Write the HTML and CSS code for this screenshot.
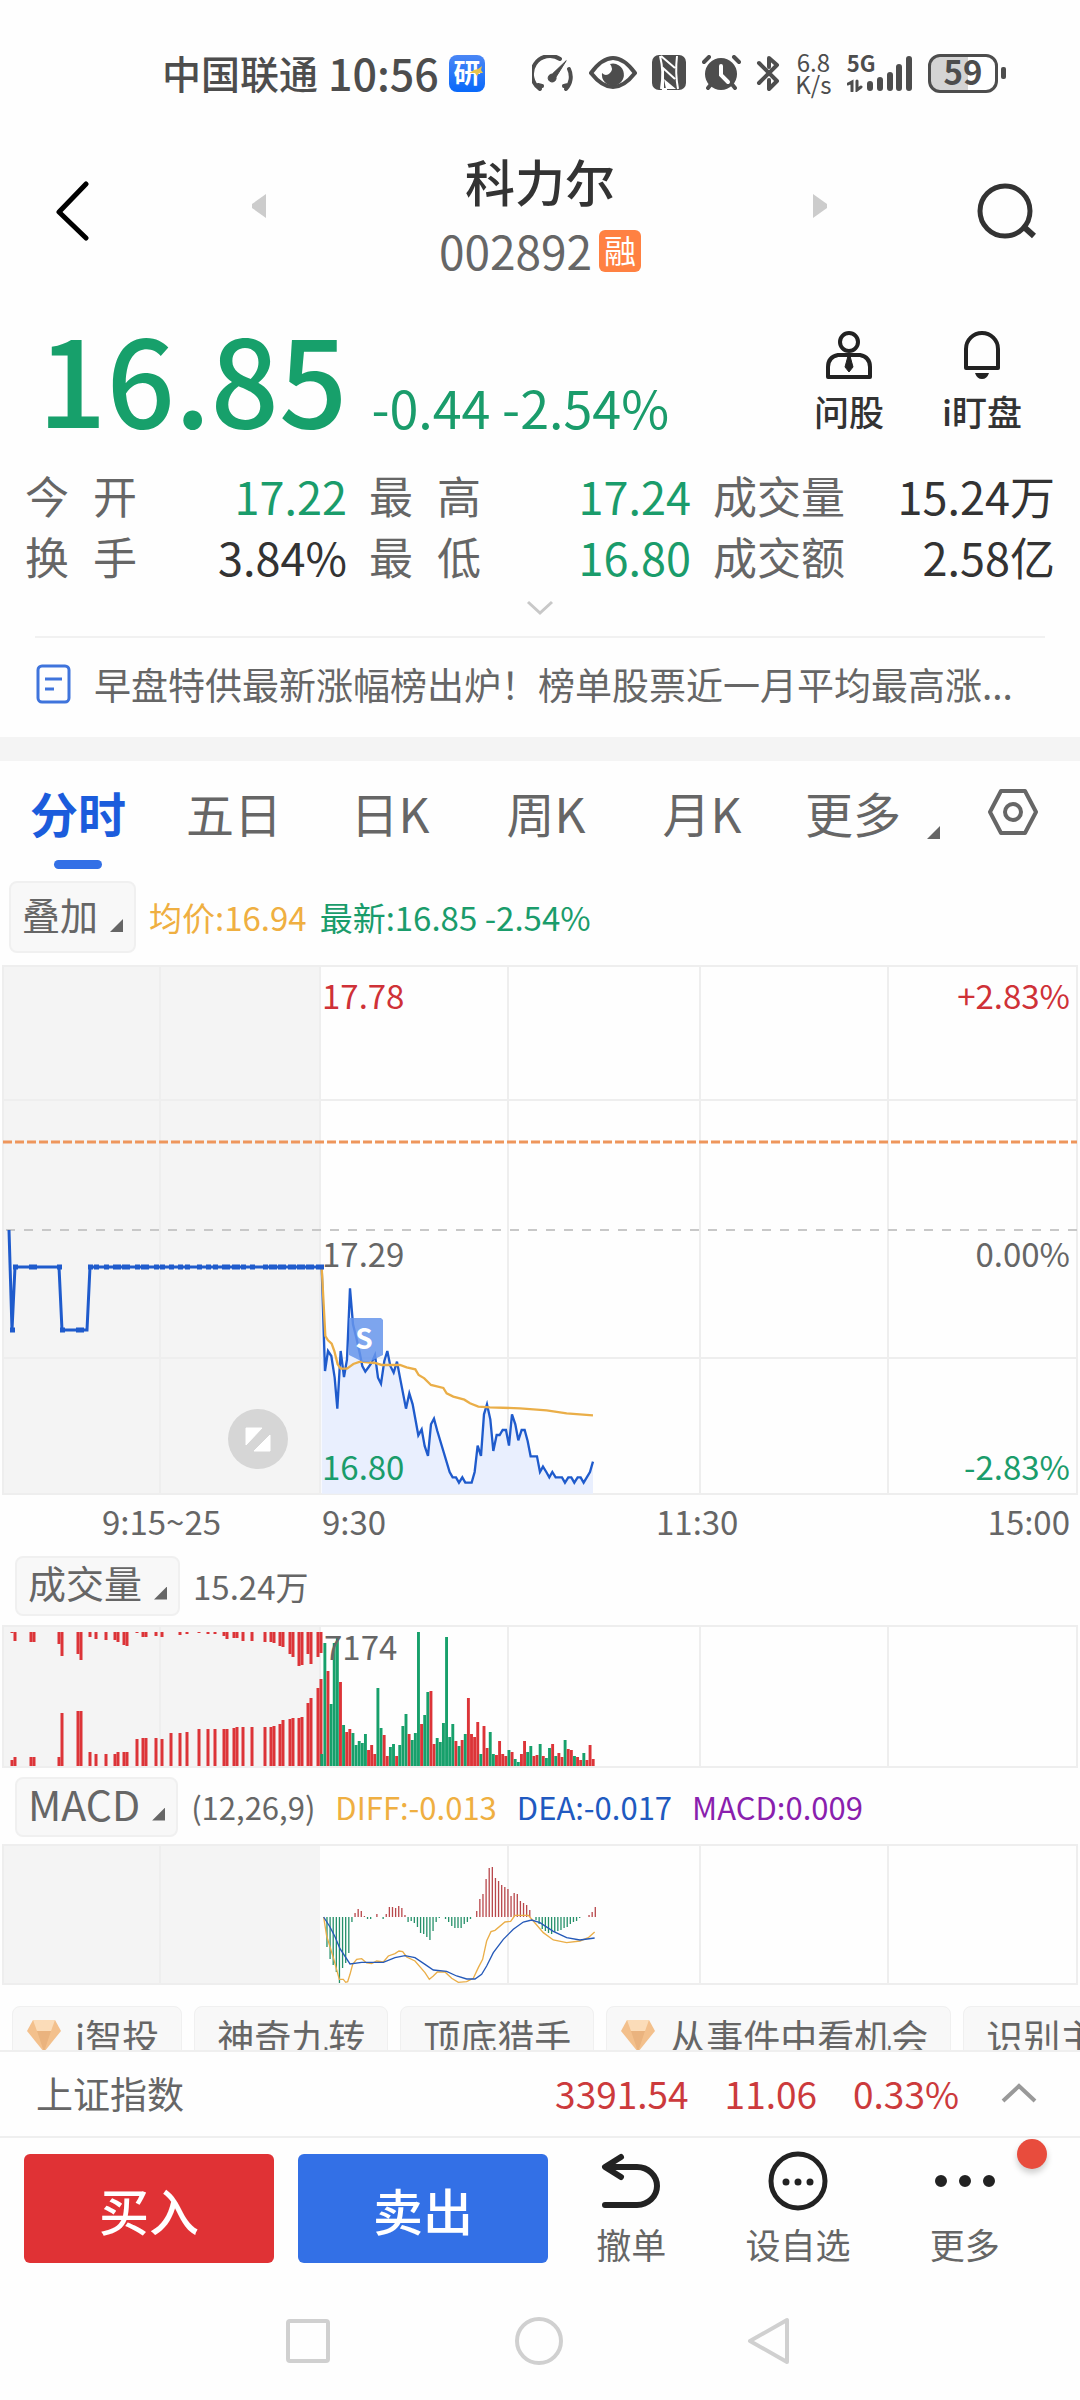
FILE: index.html
```html
<!DOCTYPE html>
<html lang="zh-CN">
<head>
    <meta charset="UTF-8">
    <meta name="viewport" content="width=device-width, initial-scale=1.0">
    <title>科力尔 002892</title>
    <link rel="stylesheet" href="styles.css">
</head>
<body>
<div class="status">
    <span class="carrier">中国联通</span>
    <span class="clock">10:56</span>
    <span class="app-icon">研<svg width="14" height="12" viewBox="0 0 14 12"><path d="M0 7l5-3 4-1 4-3-1 4 2 3-4 0-2 3-2-3z" fill="#e9c44c"/></svg></span>
    <div class="status-icons">
        <svg width="42" height="37" viewBox="0 0 42 37" fill="none" stroke="#4d4d4d" stroke-width="4" stroke-linecap="round">
            <path d="M28 4A18 18 0 0 0 8 34M10 31l-4-1M37 14A18 18 0 0 1 34 34M32 31l4-1"/>
            <path d="M34 6L24 22a4 4 0 1 1-4-3z" fill="#4d4d4d" stroke-width="1"/>
        </svg>
        <svg width="48" height="34" viewBox="0 0 48 34">
            <path d="M2 17Q13 2 24 2T46 17Q35 31 24 31T2 17z" fill="none" stroke="#4d4d4d" stroke-width="4" stroke-linejoin="round"/>
            <path d="M21 8A11 11 0 1 1 13 17Q17 21 21 17T21 8z" fill="#4d4d4d"/>
        </svg>
        <svg width="34" height="36" viewBox="0 0 34 36">
            <rect width="34" height="35" rx="7" fill="#4d4d4d"/>
            <path d="M8 1Q12 16 9 34M26 34Q23 18 25 1M9 1L23 13M15 34h-4V13l12 11" fill="none" stroke="#fff" stroke-width="2"/>
            <path d="M12 24l12 10H14z" fill="#fff"/>
        </svg>
        <svg width="39" height="36" viewBox="0 0 39 36">
            <circle cx="19" cy="19" r="16" fill="#4d4d4d"/>
            <path d="M2 7l5-5M37 7l-5-5M6 33l4-5M33 33l-4-5" stroke="#4d4d4d" stroke-width="4" stroke-linecap="round"/>
            <path d="M19 11v9l7 7" stroke="#fff" stroke-width="4" fill="none" stroke-linecap="round"/>
        </svg>
        <svg width="24" height="37" viewBox="0 0 24 37" fill="none" stroke="#4d4d4d" stroke-width="4" stroke-linecap="round" stroke-linejoin="round">
            <path d="M3 8l18 18-8 8V25M13 12V3l8 7L3 28"/>
        </svg>
        <div class="speed"><span>6.8</span><span>K/s</span></div>
        <div class="signal">
            <span>5G</span>
            <svg width="66" height="37" viewBox="0 0 66 37" fill="none" stroke="#4d4d4d" stroke-width="6" stroke-linecap="round">
                <path d="M23 29v4M33 25v8M43 20v13M52 12v21M62 4v29"/>
                <path d="M1 29l4-2v9M10 26v9l4-3" stroke-width="3"/>
            </svg>
        </div>
        <div class="battery"><span>59</span></div>
    </div>
</div>

<header class="head">
    <a class="back" href="#" aria-label="返回">
        <svg width="34" height="60" viewBox="0 0 34 60"><path d="M31 3L4 31l27 26" fill="none" stroke="#000" stroke-width="5" stroke-linecap="round" stroke-linejoin="round"/></svg>
    </a>
    <button class="plain prev" aria-label="上一只"><svg width="14" height="24"><path d="M14 0v24L0 14v-4z" fill="#ccc"/></svg></button>
    <div class="name">
        <h1>科力尔</h1>
        <div class="code">002892<span class="badge">融</span></div>
    </div>
    <button class="plain next" aria-label="下一只"><svg width="14" height="24"><path d="M0 0v24l14-10v-4z" fill="#ccc"/></svg></button>
    <button class="plain search" aria-label="搜索">
        <svg width="62" height="58" viewBox="0 0 62 58" fill="none" stroke="#333" stroke-width="5"><circle cx="29" cy="29" r="25"/><path d="M48 45l10 9" stroke-width="6"/></svg>
    </button>
</header>

<section class="quote">
    <span class="price">16.85</span>
    <span class="change">-0.44 -2.54%</span>
    <button class="plain tool">
        <svg width="46" height="48" viewBox="0 0 46 48" fill="none" stroke="#222" stroke-width="4">
            <circle cx="23" cy="11" r="9"/><path d="M12 24h22q10 2 10 12v10H2V36q0-10 10-12z" stroke-linejoin="round"/><path d="M22 25h2l3 11-4 5-4-5z" fill="#222" stroke-width="1"/>
        </svg>
        问股
    </button>
    <button class="plain tool">
        <svg width="38" height="48" viewBox="0 0 38 48" fill="none" stroke="#222" stroke-width="4">
            <path d="M3 37V18a16 16 0 0 1 32 0v19z" stroke-linejoin="round"/><path d="M12 42h14q-2 6-7 6t-7-6z" fill="#222" stroke="none"/>
        </svg>
        i盯盘
    </button>
</section>

<dl class="stats">
    <dt>今 开</dt><dd class="green">17.22</dd>
    <dt>最 高</dt><dd class="green">17.24</dd>
    <dt>成交量</dt><dd>15.24万</dd>
    <dt>换 手</dt><dd>3.84%</dd>
    <dt>最 低</dt><dd class="green">16.80</dd>
    <dt>成交额</dt><dd>2.58亿</dd>
</dl>
<button class="plain expand" aria-label="展开"><svg width="28" height="16"><path d="M2 2l12 11L26 2" fill="none" stroke="#c8c8c8" stroke-width="3"/></svg></button>

<a class="notice" href="#">
    <svg width="36" height="40" viewBox="0 0 36 40" fill="none" stroke="#3f74dc" stroke-width="3"><rect x="2" y="2" width="31" height="36" rx="4"/><path d="M9 15h17M9 25h9"/></svg>
    <span>早盘特供最新涨幅榜出炉！榜单股票近一月平均最高涨...</span>
</a>

<nav class="tabs">
    <button class="plain active">分时</button>
    <button class="plain">五日</button>
    <button class="plain">日K</button>
    <button class="plain">周K</button>
    <button class="plain">月K</button>
    <button class="plain more">更多<i class="corner"></i></button>
    <button class="plain" aria-label="设置"><svg width="50" height="46" viewBox="0 0 50 46" fill="none" stroke="#666" stroke-width="4"><path d="M13 2h24l11 21-11 21H13L2 23z" stroke-linejoin="round"/><circle cx="25" cy="23" r="8"/></svg></button>
</nav>

<div class="bar overlay">
    <button class="pick">叠加<i class="corner"></i></button>
    <span class="yellow">均价:16.94</span>
    <span class="green">最新:16.85 -2.54%</span>
</div>
<svg class="chart" viewBox="0 0 1080 584">
    <rect x="3" y="5" width="317" height="528" fill="#f4f4f4"/>
    <path class="grid" d="M3 5h1074v528H3zM3 139h1074M3 397h1074M160 5v528M320 5v528M508 5v528M700 5v528M888 5v528"/>
    <path d="M3 181h1074" stroke="#ee965c" stroke-width="3" stroke-dasharray="9 3"/>
    <path d="M6 269h1071" stroke="#c8c8c8" stroke-width="2" stroke-dasharray="9 9"/>
    <g id="minute" transform="translate(300 310) scale(0.3333)"></g>
    <path class="blue-line" d="M9 269L12 369L15 306H59L62 369H87L90 306H322"/>
    <path id="dots" class="dots"/>
    <path d="M349 357h32l2 2v35l-14 7h-6l-14-7z" fill="#6695eb" opacity="0.85"/>
    <text x="364" y="388" class="mark">S</text>
    <circle cx="258" cy="478" r="30" fill="#d6d6d6"/>
    <path d="M246 467h16l-16 17zM270 474v16h-16z" fill="#fff" stroke="#fff"/>
    <text x="322" y="48" class="red-text">17.78</text>
    <text x="322" y="306">17.29</text>
    <text x="322" y="519" class="green-text">16.80</text>
    <g text-anchor="end">
        <text x="1070" y="48" class="red-text">+2.83%</text>
        <text x="1070" y="306">0.00%</text>
        <text x="1070" y="519" class="green-text">-2.83%</text>
        <text x="1070" y="574">15:00</text>
    </g>
    <text x="102" y="574">9:15~25</text>
    <text x="322" y="574">9:30</text>
    <text x="656" y="574">11:30</text>
</svg>

<div class="bar">
    <button class="pick">成交量<i class="corner"></i></button>
    <span>15.24万</span>
</div>
<svg class="chart" viewBox="0 0 1080 150">
    <rect x="3" y="5" width="317" height="141" fill="#f4f4f4"/>
    <path class="grid" d="M3 5h1074v141H3zM160 5v141M320 5v141M508 5v141M700 5v141M888 5v141"/>
    <g id="volume"></g>
    <text x="324" y="39">7174</text>
</svg>

<div class="bar macd">
    <button class="pick">MACD<i class="corner"></i></button>
    <span>(12,26,9)</span>
    <span class="yellow">DIFF:-0.013</span>
    <span class="blue">DEA:-0.017</span>
    <span class="purple">MACD:0.009</span>
</div>
<svg class="chart" viewBox="0 0 1080 148">
    <rect x="3" y="4" width="317" height="139" fill="#f4f4f4"/>
    <path class="grid" d="M3 4h1074v139H3zM160 4v139M508 4v139M700 4v139M888 4v139"/>
    <g id="macd"></g>
</svg>

<div class="chips">
    <button><svg width="34" height="32" viewBox="0 0 34 32"><path d="M6 0h22l6 11-17 21L0 11z" fill="#f3c08c"/><path d="M6 0h22l-4 11H10z" fill="#fbdcb8"/><path d="M10 11h14l-7 21z" fill="#eab37e"/></svg>i智投</button>
    <button>神奇九转</button>
    <button>顶底猎手</button>
    <button><svg width="34" height="32" viewBox="0 0 34 32"><path d="M6 0h22l6 11-17 21L0 11z" fill="#f3c08c"/><path d="M6 0h22l-4 11H10z" fill="#fbdcb8"/><path d="M10 11h14l-7 21z" fill="#eab37e"/></svg>从事件中看机会</button>
    <button>识别主力</button>
</div>

<div class="index">
    <span class="index-name">上证指数</span>
    <span>3391.54</span>
    <span>11.06</span>
    <span>0.33%</span>
    <button class="plain" aria-label="展开指数"><svg width="36" height="20"><path d="M2 18L18 3l16 15" fill="none" stroke="#999" stroke-width="4"/></svg></button>
</div>

<footer class="trade">
    <button class="buy">买入</button>
    <button class="sell">卖出</button>
    <button class="plain action">
        <svg width="60" height="60" viewBox="0 0 60 60" fill="none" stroke="#222" stroke-width="6" stroke-linecap="round" stroke-linejoin="round"><path d="M20 6L4 16l16 10M6 16h30a20 19 0 0 1 0 38H4"/></svg>
        撤单
    </button>
    <button class="plain action">
        <svg width="60" height="60" viewBox="0 0 60 60"><circle cx="30" cy="30" r="27" fill="none" stroke="#222" stroke-width="5"/><path d="M18 31h0M30 31h0M42 31h0" stroke="#222" stroke-width="7" stroke-linecap="round"/></svg>
        设自选
    </button>
    <button class="plain action">
        <svg width="60" height="60" viewBox="0 0 60 60"><path d="M6 30h0M30 30h0M54 30h0" stroke="#222" stroke-width="12" stroke-linecap="round"/></svg>
        更多
        <i class="dot"></i>
    </button>
</footer>

<div class="sysnav">
    <svg width="46" height="50" viewBox="0 0 46 50"><rect x="3" y="5" width="40" height="40" rx="2"/></svg>
    <svg width="50" height="50" viewBox="0 0 50 50"><circle cx="25" cy="25" r="22"/></svg>
    <svg width="46" height="50" viewBox="0 0 46 50"><path d="M41 4v42L4 25z" stroke-linejoin="round"/></svg>
</div>
<script src="chart.js"></script>
</body>
</html>
```
FILE: styles.css
```css
*{
    box-sizing: border-box;
}
body{
    margin: 0;
    background: #fefefe;
    color: #666;
    font-family: "Noto Sans CJK SC", sans-serif;
    font-size: 37px;
    overflow-x: hidden;
}
button{
    font: inherit;
    color: inherit;
    padding: 0;
    margin: 0;
}
svg{
    display: block;
    flex: none;
}
.plain{
    border: 0;
    background: none;
}
.green{ color: #1a9c6b; }
.yellow{ color: #efaf41; }
.blue{ color: #2059c0; }
.purple{ color: #8a1fae; }

/* status bar */
.status{
    display: flex;
    align-items: center;
    height: 146px;
    padding: 0 75px 0 162px;
    color: #4d4d4d;
    line-height: 50px;
}
.carrier, .clock{
    padding-bottom: 2px;
    font-size: 39px;
    font-weight: 500;
}
.clock{
    margin-left: 10px;
    font-size: 43px;
}
.app-icon{
    position: relative;
    width: 36px;
    height: 37px;
    margin-left: 10px;
    border-radius: 8px;
    background: linear-gradient(#4a86f5, #0868fa);
    color: #fff;
    font-size: 27px;
    font-weight: 700;
    line-height: 34px;
    text-align: center;
}
.app-icon svg{
    position: absolute;
    right: 2px;
    top: 11px;
}
.status-icons{
    display: flex;
    flex: 1;
    justify-content: space-between;
    align-items: center;
    margin-left: 47px;
}
.speed{
    display: grid;
    font-size: 24px;
    line-height: 22px;
    text-align: center;
}
.signal{
    position: relative;
}
.signal span{
    position: absolute;
    left: 0;
    top: -5px;
    font-size: 22px;
    font-weight: 700;
    line-height: 24px;
}
.battery{
    position: relative;
    width: 70px;
    height: 39px;
    margin-right: 7px;
    border: 3px solid #4d4d4d;
    border-radius: 12px;
    background: linear-gradient(90deg, #d4d4d4 58%, #fff 58%);
    font-size: 33px;
    font-weight: 700;
    line-height: 29px;
    text-align: center;
}
.battery::after{
    content: "";
    position: absolute;
    right: -11px;
    top: 10px;
    width: 5px;
    height: 12px;
    border-radius: 2px;
    background: #4d4d4d;
}

/* title */
.head{
    display: grid;
    grid-template-columns: 197px 125px 1fr 125px 197px;
    align-items: center;
    height: 144px;
}
.back{
    margin: -24px 0 0 55px;
    padding-top: 10px;
}
.prev, .next{
    margin-top: -25px;
    padding-left: 55px;
}
.name{
    text-align: center;
}
h1{
    margin: 0;
    color: #333;
    font-size: 50px;
    font-weight: 500;
    line-height: 64px;
}
.code{
    display: flex;
    justify-content: center;
    align-items: center;
    font-size: 46px;
    line-height: 76px;
}
.badge{
    width: 42px;
    height: 42px;
    margin: 2px 0 0 7px;
    border-radius: 6px;
    background: #ff8142;
    color: #fff;
    font-size: 32px;
    line-height: 38px;
}
.search{
    justify-self: end;
    margin: -14px 42px 0 0;
}

/* price */
.quote{
    display: flex;
    align-items: flex-end;
    height: 150px;
    padding: 0 52px 0 38px;
}
.price{
    color: #17a06b;
    font-size: 120px;
    font-weight: 500;
    line-height: 128px;
}
.change{
    flex: 1;
    margin-left: 24px;
    color: #1a9c6b;
    font-size: 52px;
    line-height: 66px;
}
.tool{
    display: flex;
    flex-direction: column;
    align-items: center;
    gap: 7px;
    width: 134px;
    padding-bottom: 4px;
    color: #333;
    font-size: 35px;
    font-weight: 500;
    line-height: 50px;
}
.tool:last-child{
    width: 116px;
    margin-left: 8px;
    margin-right: -12px;
}

.stats{
    display: grid;
    grid-template-columns: 112px 1fr 134px 1fr 154px 1fr;
    margin: 0;
    padding: 25px 25px 0;
    font-size: 45px;
    line-height: 61px;
}
.stats dt{
    font-size: 44px;
    text-align: justify;
    text-align-last: justify;
}
.stats dt:nth-of-type(3n+2), .stats dt:nth-of-type(3n){
    padding-left: 22px;
}
.stats dd{
    margin: 0;
    text-align: right;
}
.stats dd:not(.green){
    color: #333;
}
.expand{
    display: block;
    margin: 13px auto 20px;
}

.notice{
    display: flex;
    align-items: center;
    gap: 22px;
    height: 101px;
    margin: 0 35px;
    padding: 0 0 8px 1px;
    border-top: 2px solid #f1f1f1;
    color: #666;
    text-decoration: none;
    white-space: nowrap;
}

/* tabs */
.tabs{
    display: grid;
    grid-template-columns: repeat(6, 13fr) 12fr;
    height: 144px;
    border-top: 24px solid #f4f4f4;
    font-size: 48px;
}
.tabs button{
    position: relative;
    display: flex;
    justify-content: center;
    align-items: center;
    height: 102px;
}
.tabs .active{
    color: #1b5cdc;
    font-weight: 700;
}
.active::after{
    content: "";
    position: absolute;
    left: 54px;
    bottom: -6px;
    width: 48px;
    height: 9px;
    border-radius: 5px;
    background: #3370e6;
}
.corner{
    width: 13px;
    height: 13px;
    background: #666;
    clip-path: polygon(100% 0, 100% 100%, 0 100%);
}
.tabs .more{
    padding-right: 10px;
}
.more .corner{
    position: absolute;
    right: -4px;
    bottom: 24px;
}
.tabs button:last-child{
    padding-left: 10px;
}

/* chart toolbars */
.bar{
    display: flex;
    align-items: center;
    gap: 13px;
    height: 76px;
    padding: 10px 15px 5px;
    font-size: 33px;
    line-height: 50px;
}
.pick{
    display: flex;
    align-items: flex-end;
    gap: 12px;
    height: 60px;
    padding: 0 11px 14px;
    border: 2px solid #f0f0f0;
    border-radius: 8px;
    background: #f8f8f8;
    font-size: 38px;
    line-height: 36px;
}
.overlay{
    height: 80px;
    padding: 0 9px 8px;
}
.overlay .pick{
    height: 72px;
    padding-bottom: 19px;
}
.macd{
    height: 70px;
    padding-top: 6px;
    gap: 20px;
    font-size: 31px;
}
.macd .pick{
    margin-right: -7px;
    font-size: 41px;
}
.chart{
    width: 100%;
    height: auto;
}
.chart text{
    fill: #666;
    font-size: 33px;
}
.chart .red-text{ fill: #cf3137; }
.chart .green-text{ fill: #1a9c6b; }
.chart .mark{
    fill: #fff;
    font-size: 28px;
    font-weight: 700;
    text-anchor: middle;
}
.grid{
    fill: none;
    stroke: #eee;
    stroke-width: 2;
}
.blue-line{
    fill: none;
    stroke: #1f5bcc;
    stroke-width: 3;
}
.dots{
    fill: none;
    stroke: #1f5bcc;
    stroke-width: 5;
}

.chips{
    display: flex;
    gap: 12px;
    height: 61px;
    padding: 17px 0 0 12px;
    overflow: hidden;
}
.chips button{
    display: flex;
    flex: none;
    align-items: center;
    gap: 14px;
    height: 60px;
    padding: 0 22px;
    border: 1px solid #f0f0f0;
    border-radius: 8px;
    background: #f8f8f8;
    line-height: 54px;
}
.chips button:has(svg){
    padding-left: 14px;
}

.index{
    display: flex;
    align-items: center;
    gap: 36px;
    height: 86px;
    padding: 0 43px 2px 36px;
    border-top: 2px solid #efefef;
    color: #cc3a3c;
}
.index-name{
    flex: 1;
    color: #666;
}
.index button{
    margin-left: 6px;
}

.trade{
    display: flex;
    height: 156px;
    padding: 16px 32px 0 24px;
    border-top: 2px solid #efefef;
}
.buy, .sell{
    width: 250px;
    height: 109px;
    margin-right: 24px;
    border: 0;
    border-radius: 6px;
    background: #e03235;
    color: #fff;
    font-size: 50px;
    font-weight: 500;
}
.sell{
    margin-right: 0;
    background: #3370e6;
}
.action{
    position: relative;
    display: flex;
    flex: 1;
    flex-direction: column;
    align-items: center;
    gap: 6px;
    margin-top: -3px;
    font-size: 35px;
    line-height: 54px;
}
.dot{
    position: absolute;
    right: 1px;
    top: -12px;
    width: 30px;
    height: 30px;
    border-radius: 50%;
    background: #e84c3d;
    box-shadow: 0 4px 6px #ccc;
}

.sysnav{
    display: flex;
    justify-content: space-between;
    padding: 24px 288px 0 285px;
}
.sysnav svg{
    fill: none;
    stroke: #d0d0d0;
    stroke-width: 4;
}
```
FILE: chart.js
```js
var RED = '#dc3438'
var GREEN = '#17a06b'
var STEP = 3.12

function add(parent, tag, attrs){
    var el = document.createElementNS('http://www.w3.org/2000/svg', tag)
    for(var key in attrs){
        el.setAttribute(key, attrs[key])
    }
    document.getElementById(parent).appendChild(el)
}

// price and average lines, minute by minute
var price = '65,-12 75,300 84,240 94,255 104,320 112,413 122,240 132,318 141,265 150,52 159,160 169,200 180,250 187,285 196,302 206,288 215,275 225,252 234,320 243,338 253,270 262,240 271,285 281,305 291,272 300,320 318,413 328,367 338,400 355,493 365,475 374,525 384,555 393,460 402,443 412,480 449,603 458,619 468,619 477,635 487,619 496,635 515,635 524,603 533,524 543,555 552,430 561,400 571,445 580,540 590,492 599,492 608,477 618,477 627,524 636,430 646,460 655,508 665,477 674,477 683,510 692,556 711,556 720,603 729,587 739,603 748,619 757,603 767,619 786,619 795,635 805,619 814,619 823,635 833,619 842,619 851,635 870,603 879,572'
var average = '65,-12 76,195 84,208 95,218 103,240 113,280 122,293 141,293 160,279 180,272 225,276 245,282 300,282 320,289 346,295 356,312 373,322 393,342 430,351 440,367 460,377 493,386 510,397 535,407 570,409 660,412 740,418 800,427 879,433'
add('minute', 'polygon', {points: price + ' 879,668 65,668', fill: '#e9effe'})
add('minute', 'polyline', {points: price, fill: 'none', stroke: '#1f5bcc', 'stroke-width': 7})
add('minute', 'polyline', {points: average, fill: 'none', stroke: '#eaae48', 'stroke-width': 7})

// call auction: x, unmatched volume, matched volume
var auction = [[12,1,6],[15,9,9],[31,10,9],[34,10,9],[59,12,9],[62,24,53],[78,22,55],[81,28,55],[90,5,14],[96,7,12],[106,8,12],[115,8,12],[118,10,14],[124,13,14],[127,14,14],[137,1,27],[143,5,28],[146,5,28],[156,4,28],[162,5,27],[171,0,33],[180,3,33],[187,2,34],[199,1,37],[208,2,37],[215,2,37],[224,4,37],[227,7,37],[234,6,38],[237,6,39],[243,9,39],[252,9,39],[265,10,39],[271,10,39],[274,11,40],[280,14,42],[283,15,46],[290,22,47],[293,25,48],[299,34,48],[302,33,49],[308,22,63],[311,32,68],[318,25,78],[321,21,87]]
var dots = 'M10 369h5'
auction.forEach(function(a){
    add('volume', 'rect', {x: a[0] - 1.5, y: 11, width: 3, height: a[1], fill: RED})
    add('volume', 'rect', {x: a[0] - 1.5, y: 145 - a[2], width: 3, height: a[2], fill: RED})
    var y = a[0] > 60 && a[0] < 85 ? 369 : 306
    if(a[0] > 12){
        dots += 'M' + (a[0] - 2) + ' ' + y + 'h5'
    }
})
document.getElementById('dots').setAttribute('d', dots)

// minute volume, minus = falling
var volume = [-12,-123,95,-62,-123,-128,84,-41,34,37,-33,-21,-25,-23,-32,16,21,12,-78,-38,31,10,-19,-22,10,-21,-40,-52,32,-26,-33,-134,42,-51,-74,75,22,-28,-24,-43,-129,-29,-42,25,-20,26,-32,68,32,29,44,-12,40,18,-34,-12,11,25,12,10,-16,14,-7,-4,12,25,-14,-20,10,11,-22,10,-8,-18,22,-10,13,9,-26,17,16,-10,9,6,-13,6,21,7]
volume.forEach(function(v, i){
    var h = Math.abs(v)
    add('volume', 'rect', {x: 320.3 + i * STEP, y: 145 - h, width: 2.9, height: h, fill: v > 0 ? RED : GREEN})
})

var macd = [0,-30,-42,-48,-55,-66,-51,-46,-36,-5,4,8,6,1,-2,-2,0,3,0,-2,3,10,10,9,11,9,2,-5,-4,-6,-10,-16,-17,-20,-23,-14,-5,-1,0,-2,-5,-9,-11,-11,-11,-7,-5,-2,0,6,18,23,38,49,50,39,36,32,30,28,21,24,23,16,14,12,7,0,-3,-7,-12,-14,-16,-17,-15,-14,-13,-11,-10,-7,-5,-4,-1,0,0,2,5,10]
macd.forEach(function(v, i){
    add('macd', 'rect', {x: 323.2 + i * STEP, y: v > 0 ? 76 - v : 76, width: 1.3, height: Math.abs(v), fill: v > 0 ? '#b8474b' : '#259069'})
})
var diff = '71,228 80,285 100,350 118,415 130,415 137,424 143,422 150,400 158,370 170,355 185,353 200,366 215,368 230,360 250,363 265,345 285,338 297,330 308,332 320,348 345,360 375,395 388,415 400,405 412,393 435,393 455,412 475,424 500,422 520,412 535,380 548,355 560,300 573,272 585,268 615,243 632,241 645,223 685,223 700,240 730,275 760,297 800,305 840,300 865,290 884,273'
var dea = '71,228 90,258 105,287 120,323 150,369 185,364 250,364 285,350 315,344 345,350 375,370 400,387 440,391 470,405 500,414 525,414 545,400 560,375 580,335 610,295 640,265 670,243 695,237 720,245 760,271 800,290 840,297 884,291'
add('macd', 'polyline', {points: diff, transform: 'translate(300 0) scale(0.3333)', fill: 'none', stroke: '#eaae48', 'stroke-width': 4})
add('macd', 'polyline', {points: dea, transform: 'translate(300 0) scale(0.3333)', fill: 'none', stroke: '#2559b8', 'stroke-width': 4})
```
